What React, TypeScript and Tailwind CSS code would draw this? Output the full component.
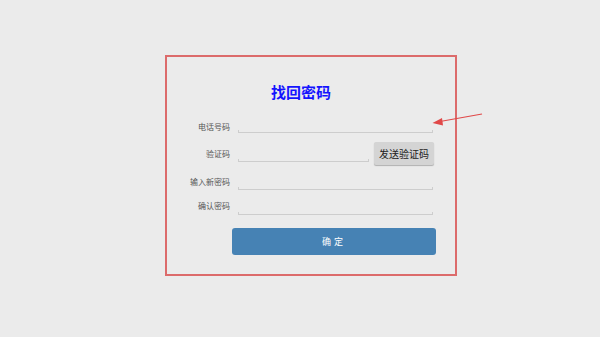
export default function App() {
  const font = { fontFamily: '"Noto Sans CJK SC", "Noto Sans", sans-serif' }

  return (
    <div className="relative w-[600px] h-[337px] bg-[#ebebeb] overflow-hidden" style={font}>
      <div className="absolute left-[165px] top-[55px] w-[292px] h-[221px] border-2 border-[#dc6b6b]">
        <div className="pt-[25px] pl-[104px] h-[46px] text-[15px] leading-[20px] font-bold text-[#1414ff]">
          找回密码
        </div>

        <div className="flex items-end h-[30px]">
          <div className="w-[63px] text-right text-[8px] leading-[12px] text-[#555]">电话号码</div>
          <div className="ml-[8px] w-[195px] h-[3px] border-b border-x border-[#cdcdcd]" />
        </div>

        <div className="flex items-end h-[33px]">
          <div className="w-[63px] mb-[6px] text-right text-[8px] leading-[12px] text-[#555]">验证码</div>
          <div className="ml-[8px] mb-[4px] w-[131px] h-[3px] border-b border-x border-[#cdcdcd]" />
          <button
            type="button"
            className="ml-[5px] mb-[1px] w-[60px] h-[23px] bg-[#d4d4d4] rounded-[2px] shadow-[0_1px_1px_rgba(0,0,0,0.25)] text-[10px] leading-[23px] text-[#222]"
          >
            发送验证码
          </button>
        </div>

        <div className="flex items-end h-[24px]">
          <div className="w-[63px] mb-[2px] text-right text-[8px] leading-[12px] text-[#555]">输入新密码</div>
          <div className="ml-[8px] w-[195px] h-[3px] border-b border-x border-[#cdcdcd]" />
        </div>

        <div className="flex items-end h-[25px]">
          <div className="w-[63px] mb-[3px] text-right text-[8px] leading-[12px] text-[#555]">确认密码</div>
          <div className="ml-[8px] w-[195px] h-[3px] border-b border-x border-[#cdcdcd]" />
        </div>

        <button
          type="button"
          className="mt-[13px] ml-[65px] w-[204px] h-[27px] bg-[#4682b4] rounded-[3px] text-white text-[9px] tracking-[3px] leading-[27px]"
        >
          确定
        </button>
      </div>

      <svg className="absolute left-0 top-0" width="600" height="337" viewBox="0 0 600 337">
        <line x1="482" y1="114" x2="440" y2="121.5" stroke="#e04848" strokeWidth="1.2" />
        <polygon points="432.5,123 442,118 443,125.5" fill="#e04848" />
      </svg>
    </div>
  )
}
